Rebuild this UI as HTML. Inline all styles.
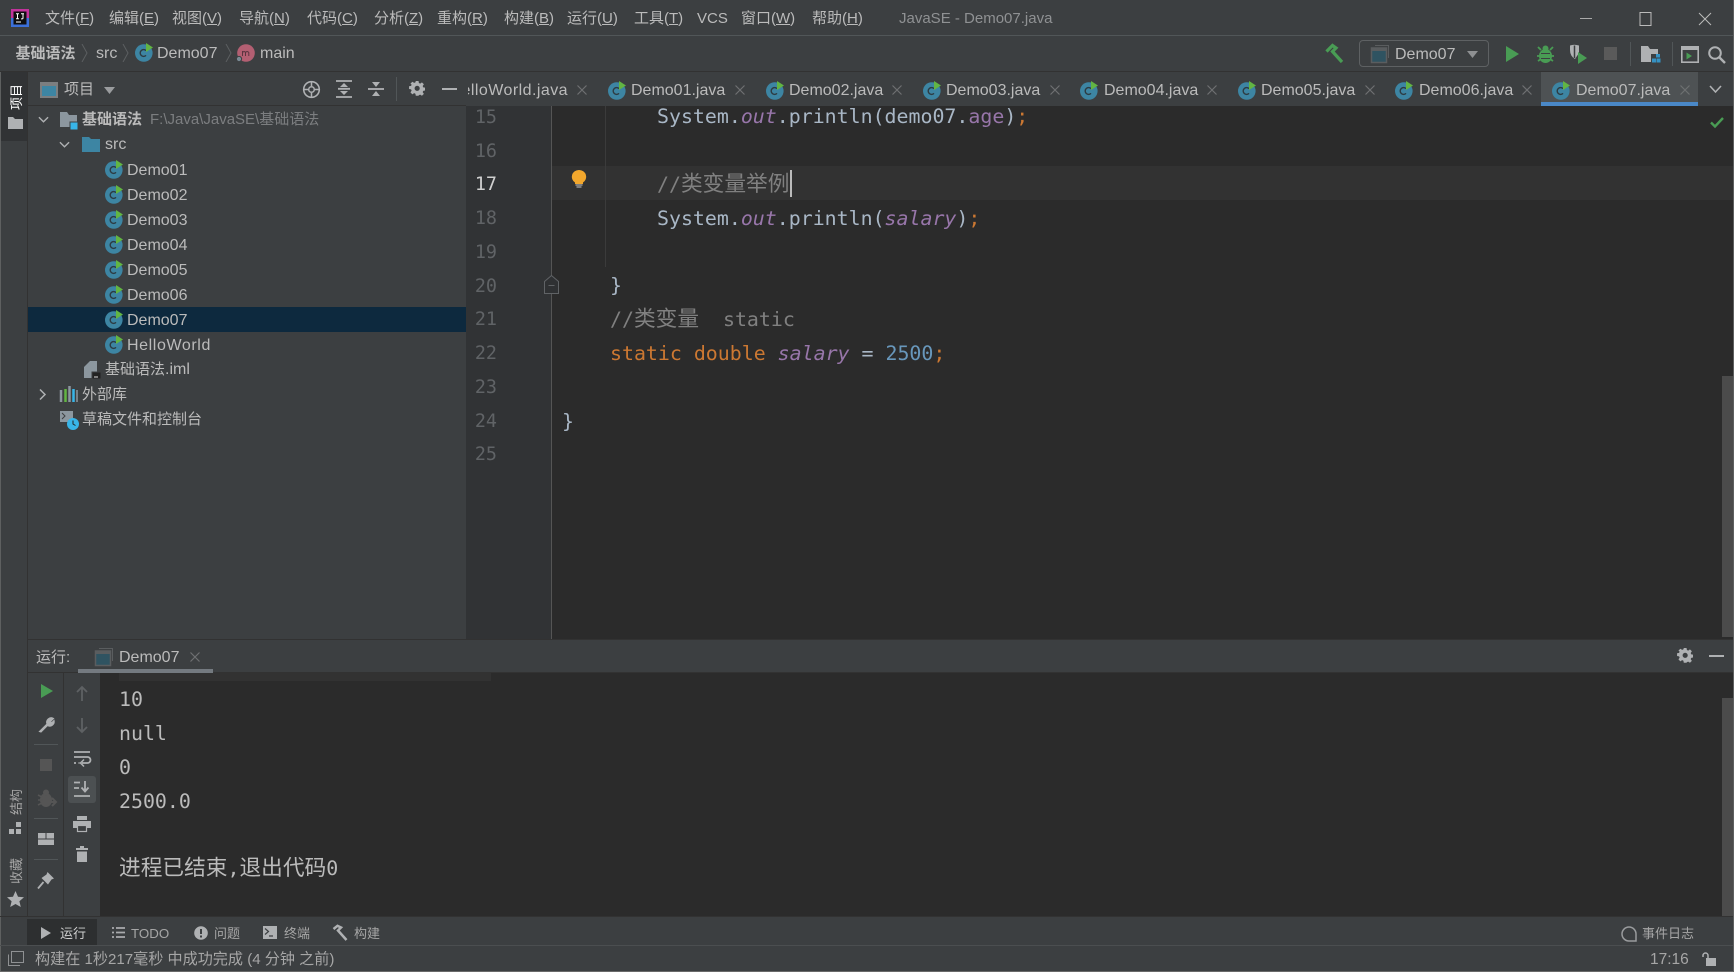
<!DOCTYPE html>
<html lang="zh"><head><meta charset="utf-8"><title>JavaSE - Demo07.java</title>
<style>
html,body{margin:0;padding:0;width:1734px;height:972px;overflow:hidden;background:#3c3f41}
body{position:relative;font-family:"Liberation Sans","Noto Sans CJK SC",sans-serif;font-size:16px;color:#bbb}
.b{position:absolute}
.t{position:absolute;line-height:20px;height:20px;white-space:pre}
.m{font-size:15px}
.c{font-family:"DejaVu Sans Mono","Noto Sans CJK SC",monospace;font-size:19.9px;color:#a9b7c6}
.c .z,.o .z{font-family:"Noto Sans CJK SC",sans-serif;font-size:21.7px;font-style:normal;line-height:20px;vertical-align:baseline}
.n{font-family:"DejaVu Sans Mono",monospace;font-size:18.4px;color:#606366;width:40px;left:457px;text-align:right}
.o{font-family:"DejaVu Sans Mono","Noto Sans CJK SC",monospace;font-size:19.9px;color:#bbb;left:119px}
.z{font-size:15px}
.k{color:#cc7832}.f{color:#9876aa}.g{color:#808080}.d{color:#6897bb}
i.f{font-style:italic}
.s{font-size:13px}
.r{position:absolute;width:30px;height:20px;line-height:20px;text-align:center;font-size:13px;color:#a6a6a6;transform:rotate(-90deg)}
svg{position:absolute;overflow:visible}
</style></head><body>
<svg width="0" height="0" style="position:absolute"><defs>
<symbol id="cl" viewBox="0 0 18 19"><circle cx="8.800" cy="10" r="8.800" fill="#3d85a3"/><path d="M11 7.600A3.400 3.400 0 1 0 11 12.400" fill="none" stroke="#2d3b42" stroke-width="1.400"/><path d="M11 0L18 4.500L11 9Z" fill="#62b543"/></symbol>
<symbol id="xx" viewBox="0 0 10 10"><path d="M.5 .5L9.500 9.500M9.500 .5L.5 9.500" stroke="#6e7072" stroke-width="1.200" fill="none"/></symbol>
<symbol id="ch" viewBox="0 0 7 18"><path d="M1 0L6 9L1 18" stroke="#5c5f61" fill="none" stroke-width="1"/></symbol>
<symbol id="dn" viewBox="0 0 12 7"><path d="M1 1L6 6L11 1" stroke="#afb1b3" fill="none" stroke-width="1.500"/></symbol>
<symbol id="gr" viewBox="0 0 16 16"><path fill="#afb1b3" fill-rule="evenodd" d="M6.500 0h3l.4 2.200 1.400.6L13.200 1.500l2.100 2.100-1.300 1.900.6 1.400 2.200.4v3l-2.200.4-.6 1.400 1.300 1.900-2.100 2.100-1.900-1.300-1.400.6L9.500 16h-3l-.4-2.200-1.400-.6-1.900 1.300L.7 12.400l1.300-1.900-.6-1.400L-.800 8.700v-3l2.200-.4.6-1.400L.7 2.900 2.800.8l1.900 1.300 1.400-.6zM8 5.200a2.800 2.800 0 1 0 0 5.600 2.800 2.800 0 0 0 0-5.600z" transform="translate(.8 0) scale(.92)"/></symbol>
</defs></svg>

<!-- title bar -->
<div class="b" style="left:0;top:35px;width:1734px;height:1px;background:#515658"></div>
<svg style="left:11px;top:9px" width="18" height="18"><rect width="18" height="18" fill="#3b6fd8"/><rect x="0" y="0" width="18" height="9" fill="#c2339b"/><rect x="2.500" y="2.500" width="13" height="13" fill="#0e0e0e"/><path d="M5 4.800h3M6.500 4.800v5M5 9.800h3M10 4.800h3M12 4.800v4.200q0 .9-1 .9h-1M5 13h5" stroke="#fff" stroke-width="1" fill="none"/></svg>
<span class="t m" style="left:45px;top:9px">文件(<u>F</u>)</span>
<span class="t m" style="left:109px;top:9px">编辑(<u>E</u>)</span>
<span class="t m" style="left:172px;top:9px">视图(<u>V</u>)</span>
<span class="t m" style="left:239px;top:9px">导航(<u>N</u>)</span>
<span class="t m" style="left:307px;top:9px">代码(<u>C</u>)</span>
<span class="t m" style="left:374px;top:9px">分析(<u>Z</u>)</span>
<span class="t m" style="left:437px;top:9px">重构(<u>R</u>)</span>
<span class="t m" style="left:504px;top:9px">构建(<u>B</u>)</span>
<span class="t m" style="left:567px;top:9px">运行(<u>U</u>)</span>
<span class="t m" style="left:634px;top:9px">工具(<u>T</u>)</span>
<span class="t m" style="left:697px;top:9px">VCS</span>
<span class="t m" style="left:741px;top:9px">窗口(<u>W</u>)</span>
<span class="t m" style="left:812px;top:9px">帮助(<u>H</u>)</span>
<span class="t m" style="left:899px;top:9px;color:#8f9193">JavaSE - Demo07.java</span>
<svg style="left:1580px;top:12px" width="140" height="14"><path d="M0 6.500H12" stroke="#aaa" stroke-width="1"/><rect x="60" y=".5" width="11" height="13" fill="none" stroke="#bbb"/><path d="M119 1L131 13M131 1L119 13" stroke="#bbb" fill="none"/></svg>

<!-- nav bar -->
<div class="b" style="left:0;top:71px;width:1734px;height:1px;background:#323232"></div>
<span class="t" style="left:15.500px;top:44px;font-size:15px;font-weight:bold">基础语法</span>
<svg style="left:81px;top:44px" width="7" height="18"><use href="#ch"/></svg>
<span class="t" style="left:96px;top:44px">src</span>
<svg style="left:122px;top:44px" width="7" height="18"><use href="#ch"/></svg>
<svg style="left:135px;top:43px" width="18" height="19"><use href="#cl"/></svg>
<span class="t" style="left:157px;top:44px">Demo07</span>
<svg style="left:225px;top:44px" width="7" height="18"><use href="#ch"/></svg>
<svg style="left:236px;top:44px" width="19" height="19"><circle cx="10" cy="9" r="8.800" fill="#b35f72"/><path d="M6.500 12V7M6.500 8.500q1.700-2 3 0V12M9.500 8.500q1.700-2 3.300 0V12" stroke="#5b3540" stroke-width="1" fill="none"/><circle cx="3" cy="15" r="2.600" fill="#7a8a94" stroke="#3c3f41"/></svg>
<span class="t" style="left:260px;top:44px">main</span>

<svg style="left:1325px;top:44px" width="20" height="20"><path d="M1.500 7.500L7.500 1.500L11 4L7.500 7.500L17 18" fill="none" stroke="#499c54" stroke-width="3.200"/></svg>
<div class="b" style="left:1359px;top:40px;width:128px;height:25px;border:1px solid #5e6163;border-radius:4px"></div>
<svg style="left:1371px;top:45px" width="18" height="18"><path d="M4 .5H17.500V13" fill="none" stroke="#5a5d5f"/><rect x=".5" y="3" width="15" height="14.500" fill="#2f5361" stroke="#5a5d5f" stroke-width="1.500"/><rect x=".5" y="3" width="15" height="3" fill="#5a5d5f"/></svg>
<span class="t" style="left:1395px;top:45px">Demo07</span>
<svg style="left:1467px;top:51px" width="11" height="7"><path d="M0 0H11L5.500 7Z" fill="#8e9092"/></svg>
<svg style="left:1506px;top:46px" width="13" height="16"><path d="M0 0L13 8L0 16Z" fill="#499c54"/></svg>
<svg style="left:1537px;top:45px" width="17" height="18"><ellipse cx="8.500" cy="11" rx="6.500" ry="7" fill="#499c54"/><circle cx="8.500" cy="3.500" r="3" fill="#499c54"/><path d="M1 2L4 5M16 2L13 5M0 11H17M1 16L4 14M16 16L13 14" stroke="#499c54" stroke-width="1.800" fill="none"/><path d="M4 8.500h9M4 13.500h9" stroke="#3c3f41" stroke-width="1"/></svg>
<svg style="left:1569px;top:44px" width="18" height="20"><path d="M1 1.500Q5 0 10 1.500V9L6 15Q1 12 1 6Z" fill="#afb1b3"/><path d="M5.500 1.500V14" stroke="#3c3f41" stroke-width="1.500"/><path d="M9 8L18 14L9 20Z" fill="#499c54"/></svg>
<div class="b" style="left:1604px;top:47px;width:13px;height:13px;background:#5a5a5a"></div>
<div class="b" style="left:1630px;top:42px;width:1px;height:24px;background:#515658"></div>
<svg style="left:1641px;top:46px" width="20" height="17"><path d="M0 0H7L9 3H17V16H0Z" fill="#afb1b3"/><rect x="10" y="8" width="10" height="9" fill="#3c3f41"/><path d="M15 8h4v3.500h-4zM11 12.500h4V16.500h-4zM15.500 12.500h4V16.500h-4z" fill="#3592c4"/></svg>
<div class="b" style="left:1672px;top:42px;width:1px;height:24px;background:#515658"></div>
<svg style="left:1681px;top:46px" width="18" height="17"><rect x=".8" y=".8" width="16.400" height="15.400" fill="none" stroke="#afb1b3" stroke-width="1.600"/><rect x="1" y="1" width="16" height="3" fill="#afb1b3"/><path d="M5.500 6.500L11 10L5.500 13.500Z" fill="#499c54"/></svg>
<svg style="left:1708px;top:46px" width="18" height="18"><circle cx="7" cy="7" r="5.800" fill="none" stroke="#afb1b3" stroke-width="2"/><path d="M11 11L17 17" stroke="#afb1b3" stroke-width="2.400"/></svg>

<!-- left stripe -->
<div class="b" style="left:0;top:72px;width:1px;height:900px;background:#5e6060"></div>
<div class="b" style="left:1px;top:72px;width:26px;height:69px;background:#313335"></div>
<div class="b" style="left:27px;top:72px;width:1px;height:844px;background:#323232"></div>
<span class="r" style="left:2px;top:87px;color:#fff">项目</span>
<svg style="left:8px;top:117px" width="15" height="12"><path d="M0 0H5L7 2H15V12H0Z" fill="#afb1b3"/></svg>
<span class="r" style="left:2px;top:792px">结构</span>
<svg style="left:9px;top:822px" width="13" height="12"><path d="M7 0h5v5H7zM0 7h5v5H0zM7 7h5v5H7z" fill="#afb1b3"/></svg>
<span class="r" style="left:2px;top:861px">收藏</span>
<svg style="left:7px;top:891px" width="17" height="16"><path d="M8.500 0L11 5.800L17 6.300L12.400 10.300L13.800 16L8.500 13L3.200 16L4.600 10.300L0 6.300L6 5.800Z" fill="#afb1b3"/></svg>

<!-- project panel header -->
<div class="b" style="left:28px;top:105px;width:438px;height:1px;background:#323232"></div>
<svg style="left:40px;top:82px" width="18" height="16"><rect x="1" y="1" width="16" height="14" fill="#3d85a3" stroke="#7b7e80" stroke-width="2"/><rect x="1" y="1" width="16" height="3" fill="#7b7e80"/></svg>
<span class="t" style="left:64px;top:80px;font-size:15px">项目</span>
<svg style="left:104px;top:87px" width="11" height="7"><path d="M0 0H11L5.500 7Z" fill="#9a9c9e"/></svg>
<svg style="left:302px;top:80px" width="19" height="19"><circle cx="9.500" cy="9.500" r="7.800" fill="none" stroke="#afb1b3" stroke-width="1.600"/><circle cx="9.500" cy="9.500" r="2.800" fill="none" stroke="#afb1b3" stroke-width="1.500"/><path d="M9.500 1V6M9.500 13V18M1 9.500H6M13 9.500H18" stroke="#afb1b3" stroke-width="1.500"/></svg>
<svg style="left:336px;top:80px" width="16" height="18"><path d="M0 1H16M0 17H16M2 8.800H14" stroke="#afb1b3" stroke-width="1.800"/><path d="M8 3L12 7H4ZM8 15L12 11H4Z" fill="#afb1b3"/></svg>
<svg style="left:368px;top:80px" width="16" height="18"><path d="M0 9H16" stroke="#afb1b3" stroke-width="1.800"/><path d="M8 7L12 2H4ZM8 11L12 16H4Z" fill="#afb1b3"/></svg>
<div class="b" style="left:396px;top:77px;width:1px;height:24px;background:#515658"></div>
<svg style="left:409px;top:81px" width="16" height="16"><use href="#gr"/></svg>
<div class="b" style="left:442px;top:88px;width:15px;height:2px;background:#afb1b3"></div>

<!-- tree -->
<div class="b" style="left:28px;top:307px;width:438px;height:25px;background:#0d293e"></div>
<svg style="left:38px;top:116px" width="11" height="7"><use href="#dn"/></svg>
<svg style="left:60px;top:112px" width="19" height="18"><path d="M0 0H7L9 3H17V15H0Z" fill="#8c979f"/><rect x="10" y="10" width="8" height="8" fill="#38b5e8" stroke="#3c3f41"/></svg>
<span class="t" style="left:82px;top:110px;font-size:15px;font-weight:bold">基础语法</span>
<span class="t" style="left:150px;top:110px;color:#7c7e80;font-size:15px">F:\Java\JavaSE\基础语法</span>
<svg style="left:59px;top:141px" width="11" height="7"><use href="#dn"/></svg>
<svg style="left:82px;top:137px" width="18" height="15"><path d="M0 0H7L9 2H18V15H0Z" fill="#3d85a3"/></svg>
<span class="t" style="left:105px;top:135px">src</span>
<svg style="left:105px;top:160px" width="18" height="19"><use href="#cl"/></svg><span class="t" style="left:127px;top:160.500px">Demo01</span>
<svg style="left:105px;top:185px" width="18" height="19"><use href="#cl"/></svg><span class="t" style="left:127px;top:185.500px">Demo02</span>
<svg style="left:105px;top:210px" width="18" height="19"><use href="#cl"/></svg><span class="t" style="left:127px;top:210.500px">Demo03</span>
<svg style="left:105px;top:235px" width="18" height="19"><use href="#cl"/></svg><span class="t" style="left:127px;top:235.500px">Demo04</span>
<svg style="left:105px;top:260px" width="18" height="19"><use href="#cl"/></svg><span class="t" style="left:127px;top:260.500px">Demo05</span>
<svg style="left:105px;top:285px" width="18" height="19"><use href="#cl"/></svg><span class="t" style="left:127px;top:285.500px">Demo06</span>
<svg style="left:105px;top:310px" width="18" height="19"><use href="#cl"/></svg><span class="t" style="left:127px;top:310.500px">Demo07</span>
<svg style="left:105px;top:335px" width="18" height="19"><use href="#cl"/></svg><span class="t" style="left:127px;top:335.500px;letter-spacing:.6px">HelloWorld</span>
<svg style="left:84px;top:361px" width="18" height="18"><path d="M6 0H13V17H0V6Z" fill="#8c979f"/><rect x="8" y="11" width="9" height="7" fill="#222" stroke="#3c3f41"/><path d="M10 16h4" stroke="#ddd"/></svg>
<span class="t" style="left:105px;top:360px"><span class="z">基础语法</span>.iml</span>
<svg style="left:39px;top:389px" width="7" height="11"><path d="M1 .5L6 5.500L1 10.500" stroke="#afb1b3" stroke-width="1.500" fill="none"/></svg>
<svg style="left:60px;top:386px" width="18" height="16"><path d="M1 4V16" stroke="#8c979f" stroke-width="2.500"/><path d="M5.500 3V16" stroke="#62b543" stroke-width="2.500"/><path d="M9.500 0V16" stroke="#8c979f" stroke-width="2.500"/><path d="M13.500 3V16" stroke="#38b5e8" stroke-width="2.500"/><path d="M17 4V16" stroke="#8c979f" stroke-width="1.500"/></svg>
<span class="t z" style="left:82px;top:385px">外部库</span>
<svg style="left:60px;top:411px" width="19" height="19"><rect width="13" height="11" fill="#8c979f"/><path d="M2 2L5 5L2 8" stroke="#3c3f41" fill="none"/><circle cx="13" cy="13" r="6" fill="#38b5e8"/><path d="M13 9.500V13L15.500 14.500" stroke="#222" fill="none"/></svg>
<span class="t z" style="left:82px;top:410px">草稿文件和控制台</span>

<!-- tabs -->
<div class="b" style="left:1541px;top:72px;width:157px;height:30px;background:#4e5254"></div>
<div class="b" style="left:1541px;top:102px;width:157px;height:4px;background:#4a88c7"></div>
<div class="b" style="left:468px;top:80px;width:100px;height:21px;overflow:hidden"><span class="t" style="right:0;top:1px;letter-spacing:.45px">HelloWorld.java</span></div>
<svg style="left:577px;top:85px" width="10" height="10"><use href="#xx"/></svg>
<svg style="left:608px;top:81px" width="18" height="19"><use href="#cl"/></svg><span class="t" style="left:631px;top:81px">Demo01.java</span><svg style="left:735px;top:85px" width="10" height="10"><use href="#xx"/></svg>
<svg style="left:766px;top:81px" width="18" height="19"><use href="#cl"/></svg><span class="t" style="left:789px;top:81px">Demo02.java</span><svg style="left:892px;top:85px" width="10" height="10"><use href="#xx"/></svg>
<svg style="left:923px;top:81px" width="18" height="19"><use href="#cl"/></svg><span class="t" style="left:946px;top:81px">Demo03.java</span><svg style="left:1050px;top:85px" width="10" height="10"><use href="#xx"/></svg>
<svg style="left:1080px;top:81px" width="18" height="19"><use href="#cl"/></svg><span class="t" style="left:1104px;top:81px">Demo04.java</span><svg style="left:1207px;top:85px" width="10" height="10"><use href="#xx"/></svg>
<svg style="left:1238px;top:81px" width="18" height="19"><use href="#cl"/></svg><span class="t" style="left:1261px;top:81px">Demo05.java</span><svg style="left:1365px;top:85px" width="10" height="10"><use href="#xx"/></svg>
<svg style="left:1395px;top:81px" width="18" height="19"><use href="#cl"/></svg><span class="t" style="left:1419px;top:81px">Demo06.java</span><svg style="left:1522px;top:85px" width="10" height="10"><use href="#xx"/></svg>
<svg style="left:1552px;top:81px" width="18" height="19"><use href="#cl"/></svg><span class="t" style="left:1576px;top:81px">Demo07.java</span><svg style="left:1680px;top:85px" width="10" height="10"><use href="#xx"/></svg>
<svg style="left:1709px;top:85px" width="13" height="8"><path d="M1 1L6.500 7L12 1" stroke="#afb1b3" stroke-width="1.600" fill="none"/></svg>

<!-- editor -->
<div class="b" style="left:466px;top:106px;width:1268px;height:533px;background:#2b2b2b;overflow:hidden"></div>
<div class="b" style="left:466px;top:106px;width:86px;height:533px;background:#313335"></div>
<div class="b" style="left:551px;top:106px;width:1px;height:533px;background:#555"></div>
<div class="b" style="left:552px;top:166px;width:1182px;height:34px;background:#323232"></div>
<div class="b" style="left:605px;top:106px;width:1px;height:161px;background:#3b3b3b"></div>
<svg style="left:572px;top:170px" width="14" height="18"><path d="M7 0a7 6.800 0 0 1 4 12.500V14H3v-1.500A7 6.800 0 0 1 7 0Z" fill="#f2a72d"/><path d="M3.500 15H10.500M4.500 17H9.500" stroke="#aaa" stroke-width="1.200"/></svg>
<svg style="left:544px;top:275px" width="15" height="19"><path d="M.5 18.500V6.500L7.500 .5L14.500 6.500V18.500Z" fill="#2f3133" stroke="#606366"/><path d="M4.500 10.500H10.500" stroke="#606366"/></svg>

<span class="t n" style="top:108px">15</span>
<span class="t n" style="top:142px">16</span>
<span class="t n" style="top:175px;color:#d0d0d0">17</span>
<span class="t n" style="top:209px">18</span>
<span class="t n" style="top:243px">19</span>
<span class="t n" style="top:277px">20</span>
<span class="t n" style="top:310px">21</span>
<span class="t n" style="top:344px">22</span>
<span class="t n" style="top:378px">23</span>
<span class="t n" style="top:412px">24</span>
<span class="t n" style="top:445px">25</span>

<span class="t c" style="left:657px;top:107px">System.<i class="f">out</i>.println(demo07.<span class="f">age</span>)<span class="k">;</span></span>
<span class="t c" style="left:657px;top:173px;color:#808080">//<span class="z">类变量举例</span></span>
<div class="b" style="left:790px;top:170px;width:2px;height:27px;background:#bbb"></div>
<span class="t c" style="left:657px;top:209px">System.<i class="f">out</i>.println(<i class="f">salary</i>)<span class="k">;</span></span>
<span class="t c" style="left:610px;top:276px">}</span>
<span class="t c" style="left:610px;top:308px;color:#808080">//<span class="z">类变量</span>  static</span>
<span class="t c" style="left:610px;top:344px"><span class="k">static double</span> <i class="f">salary</i> = <span class="d">2500</span><span class="k">;</span></span>
<span class="t c" style="left:562px;top:412px">}</span>
<svg style="left:1710px;top:117px" width="14" height="11"><path d="M1 5.500L5 9.500L13 1" stroke="#499c54" stroke-width="2.400" fill="none"/></svg>
<div class="b" style="left:1722px;top:376px;width:11px;height:261px;background:#4b4b4b"></div>

<!-- run panel header -->
<div class="b" style="left:28px;top:639px;width:1706px;height:34px;background:#3c3f41"></div>
<div class="b" style="left:28px;top:639px;width:1706px;height:1px;background:#323232"></div>
<div class="b" style="left:28px;top:672px;width:1706px;height:1px;background:#323232"></div>
<span class="t" style="left:36px;top:648px;font-size:15px">运行:</span>
<svg style="left:95px;top:648px" width="18" height="18"><path d="M4 .5H17.500V13" fill="none" stroke="#5a5d5f"/><rect x=".5" y="3" width="15" height="14.500" fill="#2f5361" stroke="#5a5d5f" stroke-width="1.500"/><rect x=".5" y="3" width="15" height="3" fill="#5a5d5f"/></svg>
<span class="t" style="left:119px;top:648px">Demo07</span>
<svg style="left:190px;top:652px" width="10" height="10"><use href="#xx"/></svg>
<div class="b" style="left:78px;top:669px;width:135px;height:4px;background:#747a80"></div>
<svg style="left:1677px;top:648px" width="16" height="16"><use href="#gr"/></svg>
<div class="b" style="left:1709px;top:655px;width:15px;height:2px;background:#afb1b3"></div>

<!-- console -->
<div class="b" style="left:100px;top:673px;width:1634px;height:243px;background:#2b2b2b"></div>
<div class="b" style="left:119px;top:673px;width:372px;height:8px;background:#323232"></div>
<div class="b" style="left:1722px;top:698px;width:11px;height:218px;background:#4b4b4b"></div>
<span class="t o" style="top:690px">10</span>
<span class="t o" style="top:724px">null</span>
<span class="t o" style="top:758px">0</span>
<span class="t o" style="top:792px">2500.0</span>
<span class="t o" style="top:857px"><span class="z">进程已结束</span>,<span class="z">退出代码</span>0</span>

<!-- run toolbars -->
<div class="b" style="left:63px;top:673px;width:1px;height:243px;background:#323232"></div>
<svg style="left:41px;top:684px" width="12" height="14"><path d="M0 0L12 7L0 14Z" fill="#499c54"/></svg>
<svg style="left:38px;top:716px" width="17" height="17"><path d="M1.500 15.500L9 8A4.500 4.500 0 0 1 15.500 2.500L12.500 5.500L13.500 7L16 4.500A4.500 4.500 0 0 1 9.500 9.500L3 16Z" fill="#afb1b3" stroke="#afb1b3" stroke-width="1.200"/></svg>
<div class="b" style="left:34px;top:744px;width:24px;height:1px;background:#515658"></div>
<div class="b" style="left:40px;top:759px;width:12px;height:12px;background:#555"></div>
<svg style="left:38px;top:789px" width="18" height="19"><ellipse cx="8" cy="11" rx="6" ry="7" fill="#555"/><circle cx="8" cy="3.500" r="3" fill="#555"/><path d="M0 6L4 8M0 11H5M0 16L4 14" stroke="#555" stroke-width="1.600"/><path d="M10 13L18 13M14 9L18 13L14 17" stroke="#555" stroke-width="2" fill="none"/></svg>
<div class="b" style="left:34px;top:818px;width:24px;height:1px;background:#515658"></div>
<svg style="left:38px;top:833px" width="16" height="12"><path d="M0 0h7.500v5.500H0zM8.500 0H16v5.500H8.500zM0 6.500h16V12H0z" fill="#afb1b3"/></svg>
<div class="b" style="left:34px;top:859px;width:24px;height:1px;background:#515658"></div>
<svg style="left:37px;top:872px" width="17" height="17"><path d="M1 16.500L6.500 10" stroke="#afb1b3" stroke-width="1.800"/><path d="M10.500 0L17 6.500L14.500 7.500L11 12.500L4.500 6L9.500 2.500Z" fill="#afb1b3"/></svg>
<svg style="left:76px;top:686px" width="12" height="15"><path d="M6 15V1M1 6L6 1L11 6" stroke="#5e6163" stroke-width="1.800" fill="none"/></svg>
<svg style="left:76px;top:718px" width="12" height="15"><path d="M6 0V14M1 9L6 14L11 9" stroke="#5e6163" stroke-width="1.800" fill="none"/></svg>
<svg style="left:74px;top:751px" width="16" height="16"><path d="M0 1H16M0 6H13.500A2.800 2.800 0 0 1 13.500 12H8M0 12H2M4.500 12H5.500" stroke="#afb1b3" stroke-width="1.800" fill="none"/><path d="M10 8.500L6.500 12L10 15.500" stroke="#afb1b3" stroke-width="1.500" fill="none"/></svg>
<div class="b" style="left:68px;top:776px;width:28px;height:27px;background:#4c5052;border-radius:3px"></div>
<svg style="left:74px;top:781px" width="16" height="16"><path d="M0 1.500H6M0 7H5M0 15H16" stroke="#afb1b3" stroke-width="1.800" fill="none"/><path d="M11 0V10M7.500 6.500L11 10.500L14.500 6.500" stroke="#afb1b3" stroke-width="1.800" fill="none"/></svg>
<svg style="left:73px;top:816px" width="18" height="16"><rect x="4" y="0" width="10" height="4" fill="#afb1b3"/><rect x="0" y="5" width="18" height="7" fill="#afb1b3"/><rect x="4.500" y="9.500" width="9" height="6" fill="#3c3f41" stroke="#afb1b3" stroke-width="1.200"/></svg>
<svg style="left:76px;top:846px" width="12" height="16"><path d="M4 0H8V2H12V4H0V2H4Z" fill="#afb1b3"/><path d="M1 5.500H11V16H1Z" fill="#afb1b3"/></svg>

<!-- tool window bar -->
<div class="b" style="left:0;top:916px;width:1734px;height:1px;background:#323232"></div>
<div class="b" style="left:27px;top:919px;width:70px;height:26px;background:#2d2f30"></div>
<svg style="left:41px;top:927px" width="10" height="12"><path d="M0 0L10 6L0 12Z" fill="#afb1b3"/></svg>
<span class="t s" style="left:60px;top:924px;color:#d0d0d0">运行</span>
<svg style="left:112px;top:927px" width="13" height="11"><path d="M0 1H2M4 1H13M0 5.500H2M4 5.500H13M0 10H2M4 10H13" stroke="#a9abad" stroke-width="1.800"/></svg>
<span class="t" style="left:131px;top:924px;font-size:13.300px;color:#a6a6a6">TODO</span>
<svg style="left:194px;top:926px" width="14" height="14"><circle cx="7" cy="7" r="6.800" fill="#afb1b3"/><path d="M7 3V8M7 9.500V11.500" stroke="#3c3f41" stroke-width="2"/></svg>
<span class="t s" style="left:214px;top:924px;color:#a6a6a6">问题</span>
<svg style="left:263px;top:926px" width="14" height="13"><rect width="14" height="13" fill="#afb1b3"/><path d="M2 2.500L5.500 5.500L2 8.500M6 10H10" stroke="#3c3f41" stroke-width="1.200" fill="none"/></svg>
<span class="t s" style="left:284px;top:924px;color:#a6a6a6">终端</span>
<svg style="left:332px;top:925px" width="16" height="16"><path d="M1.500 4L5.500 .8L9 2.500L6 5.500L14.500 15" stroke="#afb1b3" stroke-width="2.500" fill="none"/></svg>
<span class="t s" style="left:354px;top:924px;color:#a6a6a6">构建</span>
<svg style="left:1621px;top:926px" width="16" height="16"><path d="M15 15H8A7 7 0 1 1 15 8Z" fill="none" stroke="#9a9c9e" stroke-width="1.500"/></svg>
<span class="t s" style="left:1642px;top:924px;color:#a6a6a6">事件日志</span>

<!-- status bar -->
<div class="b" style="left:0;top:945px;width:1734px;height:1px;background:#4b4e50"></div>
<svg style="left:8px;top:951px" width="16" height="15"><rect x="3.500" y=".5" width="12" height="11" fill="none" stroke="#8f9193"/><path d="M.5 3.500V14.500H12" stroke="#8f9193" fill="none"/></svg>
<span class="t" style="left:35px;top:949.500px;font-size:15.100px;color:#a6a6a6">构建在 1秒217毫秒 中成功完成 (4 分钟 之前)</span>
<span class="t" style="left:1650px;top:949.500px;font-size:15.500px;color:#a6a6a6">17:16</span>
<svg style="left:1702px;top:952px" width="14" height="14"><rect x="4" y="6" width="10" height="8" fill="#afb1b3"/><path d="M1 5V3.500A2.500 2.500 0 0 1 6 3.500V6" fill="none" stroke="#afb1b3" stroke-width="1.500"/></svg>
<div class="b" style="left:0;top:971px;width:1734px;height:1px;background:#6a6a6a"></div>
<div class="b" style="left:1733px;top:0;width:1px;height:972px;background:#5e6060"></div>
</body></html>
